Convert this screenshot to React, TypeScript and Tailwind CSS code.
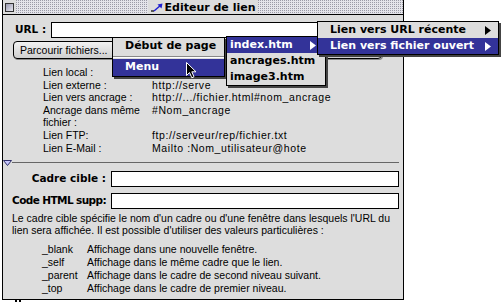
import React from 'react';

const chicago = "font-['DejaVu_Sans',sans-serif] font-bold";

const SubArrow = ({ color }: { color: string }) => (
  <svg width="6" height="9" viewBox="0 0 6 9">
    <polygon points="0,0 6,4.5 0,9" fill={color} />
  </svg>
);

const Field = () => <div className="flex-1 h-[16px] border border-black bg-white" />;

// only the part of each value that shows beside the open menus
const links: [string, string][] = [
  ['Lien local :', ''],
  ['Lien externe :', 'http://serve'],
  ['Lien vers ancrage :', 'http://.../fichier.html#nom_ancrage'],
  ['Ancrage dans même', '#Nom_ancrage'],
  ['fichier :', ''],
  ['Lien FTP:', 'ftp://serveur/rep/fichier.txt'],
  ['Lien E-Mail :', 'Mailto :Nom_utilisateur@hote'],
];

const targets: [string, string][] = [
  ['_blank', 'Affichage dans une nouvelle fenêtre.'],
  ['_self', 'Affichage dans le même cadre que le lien.'],
  ['_parent', 'Affichage dans le cadre de second niveau suivant.'],
  ['_top', 'Affichage dans le cadre de premier niveau.'],
];

export default function App() {
  return (
    <div className="relative w-[504px] h-[302px] overflow-hidden bg-white text-black font-['Liberation_Sans',Arial,sans-serif]">
      {/* window */}
      <div className="ml-[2px] w-[402px] h-[300px] border-x border-b border-black bg-[#dddddd] flex flex-col">
        {/* title bar */}
        <div className="h-[15px] shrink-0 border-b border-black flex bg-[#e4e4ea] bg-[image:conic-gradient(#9a9aa6_25%,transparent_0)] bg-[length:2px_2px]">
          <div className="w-[13px] h-full bg-[#dddddd] flex items-center justify-center">
            <div className="w-[9px] h-[9px] border border-[#333] bg-gradient-to-br from-[#9a9ab0] to-[#e8e8f0]" />
          </div>
          <div className="flex-1 flex justify-center">
            <div className="h-full bg-[#dddddd] px-[3px] flex items-center gap-[2px]">
              <svg width="12" height="9" viewBox="0 0 12 9">
                <line x1="0" y1="8" x2="3" y2="8" stroke="#000" strokeWidth="1.2" />
                <line x1="3" y1="8" x2="10" y2="2" stroke="#2020d0" strokeWidth="1.5" />
                <polygon points="11.5,0.5 6.5,1.5 10.5,5.5" fill="#2020d0" />
              </svg>
              <span className={`${chicago} text-[11px] leading-none`}>Editeur de lien</span>
            </div>
          </div>
          <div className="w-[13px]" />
        </div>

        {/* body */}
        <div className="flex flex-col pl-[12px] pr-[4px] pt-[7px] text-[10.5px]">
          <div className="flex items-center h-[16px]">
            <span className={`${chicago} text-[10.5px] w-[36px]`}>URL :</span>
            <Field />
          </div>

          <div className="flex mt-[3px] ml-[-2px]">
            <div className="w-[138px] h-[18px] rounded-[4px] border border-black bg-gradient-to-b from-[#f2f2f2] to-[#cfcfcf] shadow-[1px_1px_0_#888] flex items-center pl-[6px] leading-none">
              Parcourir fichiers...
            </div>
            <div className="ml-[111px] w-[120px] h-[18px] rounded-[4px] border border-black bg-gradient-to-b from-[#f2f2f2] to-[#cfcfcf] shadow-[1px_1px_0_#888]" />
          </div>

          <div className="mt-[7px] ml-[28px] grid grid-cols-[109px_1fr] leading-[12.6px]">
            {links.map(([label, value]) => (
              <React.Fragment key={label}>
                <span>{label}</span>
                <span className="tracking-[0.6px] whitespace-nowrap min-h-[12.6px]">{value}</span>
              </React.Fragment>
            ))}
          </div>

          <div className="mt-[5px] ml-[-12px] h-[7px] flex items-center">
            <svg width="9" height="6" viewBox="0 0 9 6">
              <polygon points="0.5,0.5 8.5,0.5 4.5,5.5" fill="#c8c8ff" stroke="#30306a" strokeWidth="1" />
            </svg>
            <div className="flex-1 h-[1px] bg-[#666]" />
          </div>

          <div className="mt-[5px] flex items-center h-[16px]">
            <div className="w-[96px] pr-[5px] flex justify-end">
              <span className={`${chicago} text-[10.5px] whitespace-nowrap`}>Cadre cible :</span>
            </div>
            <Field />
          </div>
          <div className="mt-[6px] flex items-center h-[16px]">
            <div className="w-[96px] pr-[5px] flex justify-end">
              <span className={`${chicago} text-[10.5px] tracking-[-0.6px] whitespace-nowrap`}>Code HTML supp:</span>
            </div>
            <Field />
          </div>

          <p className="mt-[3px] ml-[-3px] leading-[12px] whitespace-nowrap">
            Le cadre cible spécifie le nom d'un cadre ou d'une fenêtre dans lesquels l'URL du
            <br />
            lien sera affichée. Il est possible d'utiliser des valeurs particulières :
          </p>

          <div className="mt-[7px] ml-[27px] grid grid-cols-[45px_1fr] leading-[13px]">
            {targets.map(([t, d]) => (
              <React.Fragment key={t}>
                <span>{t}</span>
                <span>{d}</span>
              </React.Fragment>
            ))}
          </div>
        </div>
      </div>

      <div className="flex ml-[15px] gap-[2px]">
        <div className="w-[2px] h-[2px] bg-black" />
        <div className="w-[2px] h-[2px] bg-black" />
      </div>

      {/* popup: Début de page / Menu */}
      <div className={`absolute left-[112px] top-[37px] w-[113px] border border-black bg-[#dddddd] shadow-[2px_2px_0_#444] ${chicago} text-[11px]`}>
        <div className="h-[16px] flex items-center pl-[12px]">Début de page</div>
        <div className="h-[5px] flex flex-col justify-center">
          <div className="h-[1px] bg-[#888]" />
          <div className="h-[1px] bg-white" />
        </div>
        <div className="h-[17px] flex items-center pl-[12px] bg-[#333399] text-white">Menu</div>
      </div>

      {/* submenu: files */}
      <div className={`absolute left-[226px] top-[36px] w-[100px] border border-black bg-[#dddddd] shadow-[2px_2px_0_#444] ${chicago} text-[11px]`}>
        <div className="h-[16px] flex items-center justify-between pl-[3px] pr-[9px] bg-[#333399] text-white">
          <span>index.htm</span>
          <SubArrow color="#ffffff" />
        </div>
        <div className="h-[16px] flex items-center pl-[3px]">ancrages.htm</div>
        <div className="h-[16px] flex items-center pl-[3px]">image3.htm</div>
      </div>

      {/* menu: link types */}
      <div className={`absolute left-[317px] top-[21px] w-[182px] border border-black bg-[#dddddd] shadow-[2px_2px_0_#444] ${chicago} text-[11px]`}>
        <div className="h-[16px] flex items-center justify-between pl-[12px] pr-[7px]">
          <span>Lien vers URL récente</span>
          <SubArrow color="#000000" />
        </div>
        <div className="h-[16px] flex items-center justify-between pl-[12px] pr-[7px] bg-[#333399] text-white">
          <span>Lien vers fichier ouvert</span>
          <SubArrow color="#ffffff" />
        </div>
      </div>

      {/* cursor */}
      <svg className="absolute left-[186px] top-[62px]" width="12" height="17" viewBox="0 0 12 17">
        <polygon points="0.5,0.5 0.5,13.5 3.5,10.5 5.8,15.8 8,14.8 5.8,9.8 10,9.8" fill="#000" stroke="#fff" strokeWidth="1" />
      </svg>
    </div>
  );
}
